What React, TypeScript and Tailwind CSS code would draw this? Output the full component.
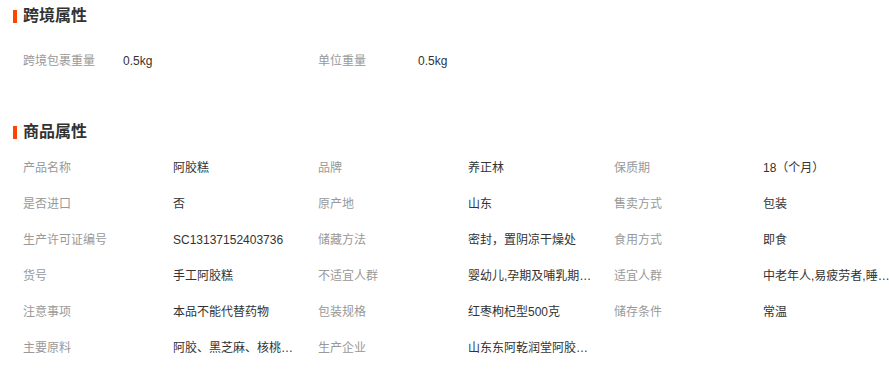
const crossBorder = [
  { label: "跨境包裹重量", value: "0.5kg" },
  { label: "单位重量", value: "0.5kg" },
];

const attrs = [
  ["产品名称", "阿胶糕", "品牌", "养正林", "保质期", "18（个月）"],
  ["是否进口", "否", "原产地", "山东", "售卖方式", "包装"],
  ["生产许可证编号", "SC13137152403736", "储藏方法", "密封，置阴凉干燥处", "食用方式", "即食"],
  ["货号", "手工阿胶糕", "不适宜人群", "婴幼儿,孕期及哺乳期妇女", "适宜人群", "中老年人,易疲劳者,睡眠不佳者"],
  ["注意事项", "本品不能代替药物", "包装规格", "红枣枸杞型500克", "储存条件", "常温"],
  ["主要原料", "阿胶、黑芝麻、核桃仁、红枣", "生产企业", "山东东阿乾润堂阿胶有限公司", "", ""],
];

const SectionTitle = ({ title }: { title: string }) => (
  <div className="flex items-center h-[16px]">
    <span className="w-[4px] h-[13px] bg-[#ff4400]" />
    <h3 className="ml-[6px] text-[16px] leading-[16px] font-bold text-[#333]">{title}</h3>
  </div>
);

export default function App() {
  return (
    <div
      className="w-[889px] h-[376px] bg-white pl-[13px] pt-[8px] text-[12px] overflow-hidden"
      style={{ fontFamily: '"Liberation Sans", "Noto Sans CJK SC", sans-serif' }}
    >
      {/* 跨境属性 */}
      <SectionTitle title="跨境属性" />
      <div className="mt-[19px] pl-[10px] flex h-[36px] items-center">
        {crossBorder.map((item) => (
          <div key={item.label} className="flex w-[295px]">
            <span className="w-[100px] text-[#999]">{item.label}</span>
            <span className="text-[#333]">{item.value}</span>
          </div>
        ))}
      </div>

      {/* 商品属性 */}
      <div className="mt-[45px]">
        <SectionTitle title="商品属性" />
      </div>
      <div className="mt-[10px] pl-[10px] grid grid-cols-[150px_145px_150px_146px_149px_1fr]">
        {attrs.map((row, i) =>
          row.map((cell, j) => (
            <div
              key={`${i}-${j}`}
              className={`h-[36px] leading-[36px] ${j % 2 === 0 ? "text-[#999]" : "text-[#333]"}`}
            >
              <span className="block max-w-[127px] truncate">{cell}</span>
            </div>
          ))
        )}
      </div>
    </div>
  );
}
